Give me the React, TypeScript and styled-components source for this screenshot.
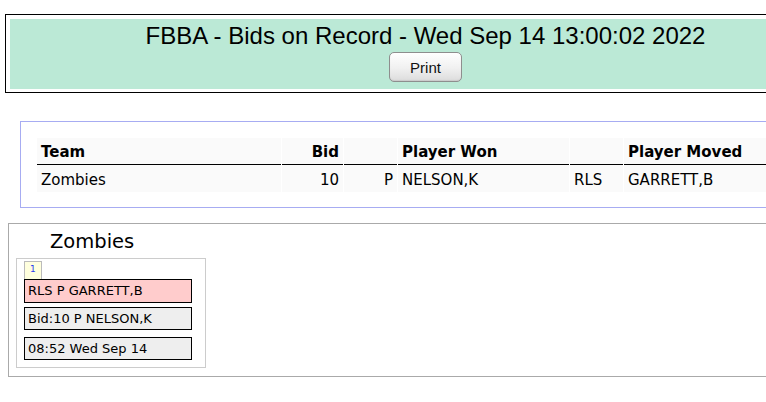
import React from "react";
import styled, { createGlobalStyle } from "styled-components";

const GlobalStyle = createGlobalStyle`
  html, body {
    margin: 0;
    padding: 0;
    overflow: hidden;
    background: #fff;
  }
  body {
    font-family: "DejaVu Sans", Verdana, sans-serif;
    color: #000;
  }
`;

const bids = [
  {
    team: "Zombies",
    bid: 10,
    wonPos: "P",
    won: "NELSON,K",
    movedPos: "RLS",
    moved: "GARRETT,B",
  },
];

const columns = [244, 61, 53, 171, 53, 205];

function App() {
  return (
    <Page>
      <GlobalStyle />
      <Header>
        <HeaderInner>
          <Title>FBBA - Bids on Record - Wed Sep 14 13:00:02 2022</Title>
          <PrintButton>Print</PrintButton>
        </HeaderInner>
      </Header>

      <BidsPanel>
        <BidsTable>
          <colgroup>
            {columns.map((w, i) => (
              <col key={i} style={{ width: w }} />
            ))}
          </colgroup>
          <thead>
            <tr>
              <Th>Team</Th>
              <Th $right>Bid</Th>
              <Th />
              <Th>Player Won</Th>
              <Th />
              <Th>Player Moved</Th>
            </tr>
          </thead>
          <tbody>
            {bids.map((b) => (
              <tr key={b.team}>
                <Td>{b.team}</Td>
                <Td $right>{b.bid}</Td>
                <Td $right>{b.wonPos}</Td>
                <Td>{b.won}</Td>
                <Td>{b.movedPos}</Td>
                <Td>{b.moved}</Td>
              </tr>
            ))}
          </tbody>
        </BidsTable>
      </BidsPanel>

      <TeamPanel>
        <TeamName>Zombies</TeamName>
        <Card>
          <Badge>1</Badge>
          <Line $tone="pink">RLS P GARRETT,B</Line>
          <Line $tone="gray" $gap={4}>Bid:10 P NELSON,K</Line>
          <Line $tone="gray" $gap={7}>08:52 Wed Sep 14</Line>
        </Card>
      </TeamPanel>
    </Page>
  );
}

export default App;

const Page = styled.div`
  width: 860px;
  padding-top: 14px;
`;

const Header = styled.div`
  margin-left: 5px;
  width: 840px;
  border: 1px solid #000;
  padding: 4px 3px 3px 4px;
  box-sizing: border-box;
`;

const HeaderInner = styled.div`
  background: #bbe9d6;
  display: flex;
  flex-direction: column;
  align-items: center;
  padding: 3px 0 7px;
`;

const Title = styled.div`
  font-family: "Liberation Sans", Arial, sans-serif;
  font-size: 24px;
  line-height: 28px;
`;

const PrintButton = styled.button`
  margin-top: 2px;
  width: 73px;
  height: 30px;
  font-family: "Liberation Sans", Arial, sans-serif;
  font-size: 15px;
  color: #111;
  border: 1px solid #8e8e8e;
  border-radius: 5px;
  background: linear-gradient(#ffffff, #f0f0f0 55%, #dcdcdc);
  box-shadow: inset 0 -1px 1px rgba(0, 0, 0, 0.08);
  padding: 0;
`;

const BidsPanel = styled.div`
  margin: 28px 0 0 20px;
  width: 830px;
  border: 1px solid #a7acf2;
  padding: 16px 16px 15px;
  box-sizing: border-box;
`;

const BidsTable = styled.table`
  table-layout: fixed;
  width: 794px;
  border-collapse: separate;
  border-spacing: 1px 0;
  margin-left: -1px;
  font-size: 15px;
`;

const Th = styled.th<{ $right?: boolean }>`
  box-sizing: border-box;
  background: #fafafa;
  text-align: ${(p) => (p.$right ? "right" : "left")};
  font-weight: bold;
  padding: 5px 4px 3px;
  line-height: 18px;
  border-bottom: 1px solid #000;
`;

const Td = styled.td<{ $right?: boolean }>`
  box-sizing: border-box;
  background: #fafafa;
  text-align: ${(p) => (p.$right ? "right" : "left")};
  padding: 6px 4px 3px;
  line-height: 18px;
`;

const TeamPanel = styled.div`
  margin: 15px 0 0 8px;
  width: 840px;
  border: 1px solid #aaa;
  padding: 6px 0 8px 7px;
  box-sizing: border-box;
`;

const TeamName = styled.div`
  font-size: 19.5px;
  line-height: 23px;
  padding-left: 34px;
  margin-bottom: 5px;
`;

const Card = styled.div`
  width: 190px;
  box-sizing: border-box;
  border: 1px solid #ccc;
  padding: 2px 13px 7px 7px;
  display: flex;
  flex-direction: column;
  align-items: flex-start;
`;

const Badge = styled.div`
  width: 18px;
  height: 18px;
  box-sizing: border-box;
  border: 1px solid #bbb;
  border-bottom: none;
  background: #ffffdd;
  color: #2a3bef;
  font-size: 9px;
  line-height: 15px;
  padding-left: 5px;
`;

const Line = styled.div<{ $tone: "pink" | "gray"; $gap?: number }>`
  width: 168px;
  height: ${(p) => (p.$tone === "pink" ? 24 : 23)}px;
  box-sizing: border-box;
  margin-top: ${(p) => p.$gap ?? 0}px;
  border: 1px solid #000;
  background: ${(p) => (p.$tone === "pink" ? "#ffcccc" : "#eeeeee")};
  font-size: 13px;
  line-height: 21px;
  padding-left: 3px;
  white-space: nowrap;
`;
